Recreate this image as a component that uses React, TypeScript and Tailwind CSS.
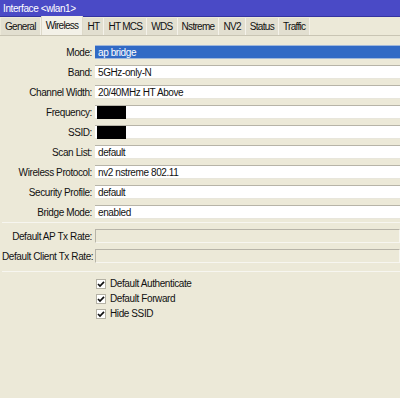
import React from "react";

const tabs = ["General", "Wireless", "HT", "HT MCS", "WDS", "Nstreme", "NV2", "Status", "Traffic"];

type Field = { label: string; value?: string; hidden?: boolean; selected?: boolean };

const fields: Field[] = [
    { label: "Mode:", value: "ap bridge", selected: true },
    { label: "Band:", value: "5GHz-only-N" },
    { label: "Channel Width:", value: "20/40MHz HT Above" },
    { label: "Frequency:", hidden: true },
    { label: "SSID:", hidden: true },
    { label: "Scan List:", value: "default" },
    { label: "Wireless Protocol:", value: "nv2 nstreme 802.11" },
    { label: "Security Profile:", value: "default" },
    { label: "Bridge Mode:", value: "enabled" },
];

const checks = ["Default Authenticate", "Default Forward", "Hide SSID"];

const Row = ({ label, children }: { label: string; children: React.ReactNode }) => (
    <div className="flex items-center h-[20px]">
        <div className="w-[93px] shrink-0 text-right pr-[3px] whitespace-nowrap">{label}</div>
        <div className="flex-1 h-[14px]">{children}</div>
    </div>
);

export default function App() {
    return (
        <div
            className="w-[400px] h-[398px] bg-[#ece9d8] text-[10px] tracking-[-0.4px] text-[#111] overflow-hidden"
            style={{ fontFamily: '"Liberation Sans", Arial, sans-serif' }}
        >
            {/* title bar */}
            <div className="h-[17px] bg-[#4a4ac6] text-white flex items-center px-[3px] border-b border-[#3434a0]">
                Interface &lt;wlan1&gt;
            </div>

            {/* tabs */}
            <div className="flex h-[19px] items-end border-b border-[#c9c5b4] pl-[1px] tracking-[-0.7px]">
                {tabs.map((t) =>
                    t === "Wireless" ? (
                        <div key={t} className="h-[19px] px-[4px] flex items-center bg-[#f3f1e8] border-x border-[#ddd9c9]">
                            {t}
                        </div>
                    ) : (
                        <div key={t} className="h-[17px] px-[4px] flex items-center bg-[#e2dfd0] border-r border-[#f4f2ea]">
                            {t}
                        </div>
                    )
                )}
            </div>

            {/* fields */}
            <div className="pt-[6px] pl-[2px]">
                {fields.map((f) => (
                    <Row key={f.label} label={f.label}>
                        {f.selected ? (
                            <div className="h-full bg-[#316ac5] text-white px-[3px] flex items-center border-y border-[#9fb7da]">
                                {f.value}
                            </div>
                        ) : (
                            <div className="h-full bg-white border-t border-[#b7b4a8] border-b border-b-[#e8e6dc] flex items-center px-[3px]">
                                {f.hidden ? <div className="w-[29px] h-[13px] bg-black -ml-[1px]" /> : f.value}
                            </div>
                        )}
                    </Row>
                ))}

                <div className="h-px bg-[#d6d2c2] mb-[3px] border-b border-[#f7f6f0]" />

                <Row label="Default AP Tx Rate:">
                    <div className="h-full border border-[#b7b4a8] border-b-[#f7f6f0] border-r-[#f7f6f0]" />
                </Row>
                <Row label="Default Client Tx Rate:">
                    <div className="h-full border border-[#b7b4a8] border-b-[#f7f6f0] border-r-[#f7f6f0]" />
                </Row>

                <div className="h-px bg-[#d6d2c2] mt-[5px] mb-[4px] border-b border-[#f7f6f0]" />

                <div className="flex flex-col pl-[94px]">
                    {checks.map((c) => (
                        <div key={c} className="flex items-center h-[15px] gap-[4px]">
                            <div className="w-[10px] h-[10px] bg-white border border-[#b4b1a4] flex items-center justify-center">
                                <svg width="8" height="8" viewBox="0 0 8 8">
                                    <path d="M1 4 L3 6 L7 1.8" stroke="#111" strokeWidth="1.7" fill="none" />
                                </svg>
                            </div>
                            <span>{c}</span>
                        </div>
                    ))}
                </div>
            </div>
        </div>
    );
}
